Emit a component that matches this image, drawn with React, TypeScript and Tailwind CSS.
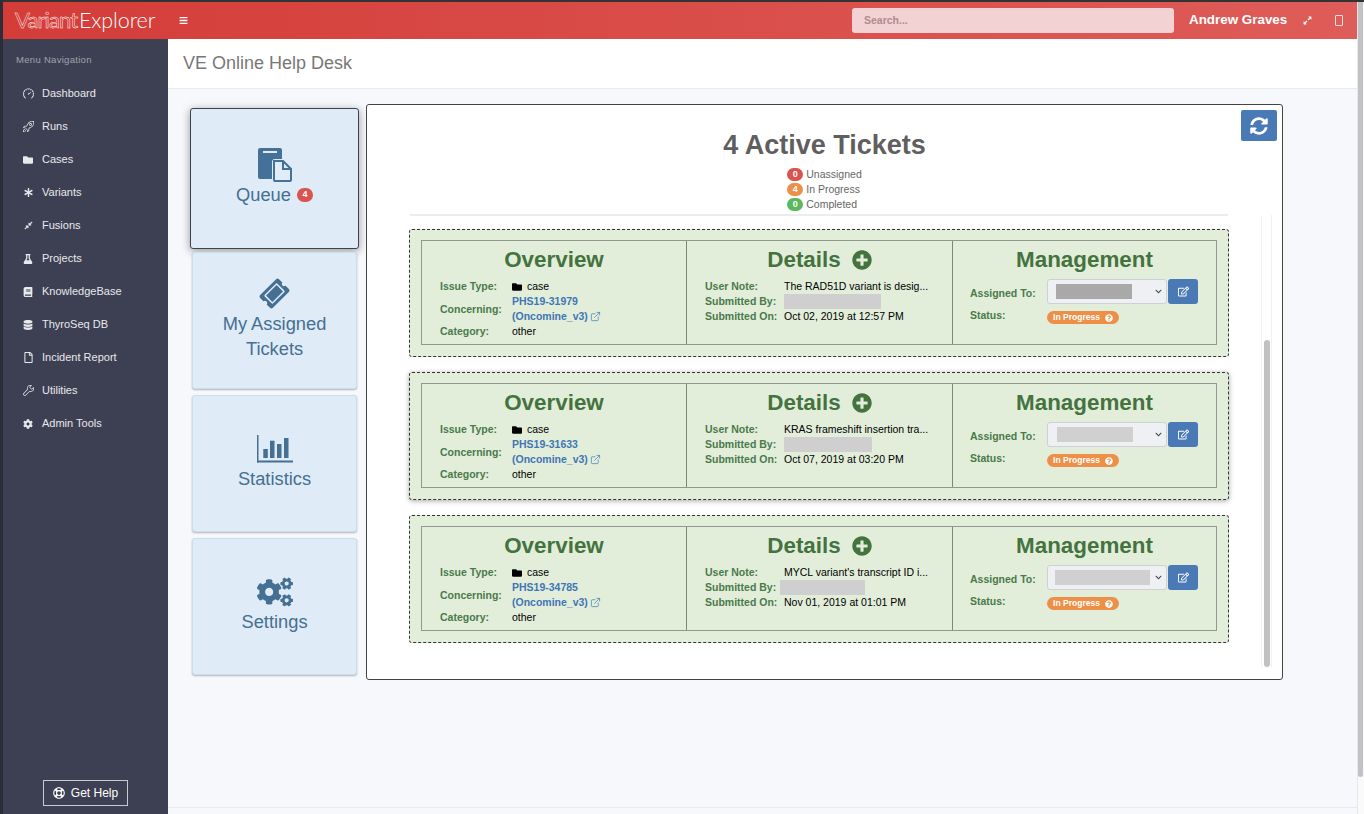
import React from 'react';
import { FaAsterisk, FaBars, FaBook, FaChevronDown, FaCog, FaCogs, FaCompressAlt, FaDatabase, FaExpandAlt, FaFlask, FaFolder, FaPlusCircle, FaQuestionCircle, FaRegEdit, FaRegFile, FaRegLifeRing, FaSyncAlt, FaTicketAlt } from 'react-icons/fa';
import { SlRocket, SlSpeedometer, SlWrench } from 'react-icons/sl';
import { ExternalLink } from 'lucide-react';

const navItems = [
  { label: 'Dashboard', icon: <SlSpeedometer size={11} /> },
  { label: 'Runs', icon: <SlRocket size={11} /> },
  { label: 'Cases', icon: <FaFolder size={10} /> },
  { label: 'Variants', icon: <FaAsterisk size={9} /> },
  { label: 'Fusions', icon: <FaCompressAlt size={9} /> },
  { label: 'Projects', icon: <FaFlask size={10} /> },
  { label: 'KnowledgeBase', icon: <FaBook size={10} /> },
  { label: 'ThyroSeq DB', icon: <FaDatabase size={10} /> },
  { label: 'Incident Report', icon: <FaRegFile size={11} /> },
  { label: 'Utilities', icon: <SlWrench size={11} /> },
  { label: 'Admin Tools', icon: <FaCog size={10} /> },
];

const tickets = [
  { id: 'PHS19-31979', note: 'The RAD51D variant is desig...', date: 'Oct 02, 2019 at 12:57 PM', byWidth: 'w-[97px] ml-0', selectBar: 'w-[76px] bg-[#a9a9a9] ml-2', shadow: '' },
  { id: 'PHS19-31633', note: 'KRAS frameshift insertion tra...', date: 'Oct 07, 2019 at 03:20 PM', byWidth: 'w-[88px] ml-0', selectBar: 'w-[76px] bg-[#d0d0d0] ml-[9px]', shadow: 'shadow-[0_1px_5px_rgba(0,0,0,0.35)]' },
  { id: 'PHS19-34785', note: "MYCL variant's transcript ID i...", date: 'Nov 01, 2019 at 01:01 PM', byWidth: 'w-[85px] -ml-1', selectBar: 'w-[95px] bg-[#d0d0d0] ml-[7px]', shadow: '' },
];

function QueueIcon() {
  return (
    <svg width="34" height="34" viewBox="0 0 34 34" className="text-[#44719a]">
      <path d="M2 0h20a2 2 0 0 1 2 2v9h-7a3 3 0 0 0-3 3v17H2a2 2 0 0 1-2-2V2a2 2 0 0 1 2-2z" fill="currentColor" />
      <rect x="5" y="3" width="14" height="2" fill="#ffffff" opacity="0.85" />
      <path d="M16 13h9l8 8v11a1 1 0 0 1-1 1H17a1 1 0 0 1-1-1z" fill="#e0ecf6" stroke="currentColor" strokeWidth="2" />
      <path d="M25 13v8h8" fill="none" stroke="currentColor" strokeWidth="2" />
    </svg>
  );
}

function StatsIcon() {
  return (
    <svg width="36" height="28" viewBox="0 0 36 28" fill="currentColor">
      <rect x="0" y="0" width="1.5" height="27.5" />
      <rect x="0" y="25.5" width="36" height="2" />
      <rect x="6.3" y="14" width="4.5" height="9" />
      <rect x="13" y="5.7" width="4.5" height="17.3" />
      <rect x="20" y="9" width="4.5" height="14" />
      <rect x="27" y="3" width="4.5" height="20" />
    </svg>
  );
}

function NavCard({ icon, lines, badge, active }: { icon: React.ReactNode; lines: string[]; badge?: string; active?: boolean }) {
  return (
    <div
      className={
        active
          ? 'flex h-[141px] w-[169px] flex-col items-center rounded-[3px] border border-[#3d4450] bg-[#dfebf6] pt-[38px] text-[#456f93] shadow-[0_2px_8px_rgba(0,0,0,0.4)]'
          : 'mx-[2px] flex h-[137px] w-[165px] flex-col items-center justify-center rounded-[3px] border border-[#c9dfea] bg-[#dfebf6] pb-[5px] text-[#456f93] shadow-[0_1px_2px_rgba(0,0,0,0.28)]'
      }
    >
      <div className="flex h-[35px] items-center justify-center">{icon}</div>
      {lines.map((line) => (
        <div key={line} className="flex h-[25px] items-center text-[18.3px] leading-[25px]">
          {line}
          {badge && (
            <span className="ml-[6px] flex h-[14px] w-[16px] items-center justify-center rounded-full bg-[#d9534f] text-[9px] font-bold text-white">
              {badge}
            </span>
          )}
        </div>
      ))}
    </div>
  );
}

function Legend({ color, count, label }: { color: string; count: string; label: string }) {
  return (
    <div className="flex h-[15px] items-center">
      <span className={`flex h-[13px] w-[16px] items-center justify-center rounded-full text-[9px] font-bold text-white ${color}`}>{count}</span>
      <span className="ml-[3px] text-[10.5px] text-[#666666]">{label}</span>
    </div>
  );
}

function Label({ children }: { children: React.ReactNode }) {
  return <div className="text-[10.5px] font-bold leading-[15px] text-[#4a7a4a]">{children}</div>;
}

function TicketCard({ ticket }: { ticket: (typeof tickets)[number] }) {
  return (
    <div className={`h-[128px] rounded-[3px] border border-dashed border-[#333333] bg-[#e2eeda] px-[11px] pt-[10px] ${ticket.shadow}`}>
      <div className="grid h-[105px] grid-cols-[265px_266px_1fr] border border-[#8f9a8c]">
        <div className="border-r border-[#7d877b]">
          <h2 className="h-[38px] text-center text-[22.4px] font-bold leading-[37px] text-[#44733f]">Overview</h2>
          <div className="grid grid-cols-[72px_1fr] pl-[18px] text-[10.5px] leading-[15px] text-black">
            <Label>Issue Type:</Label>
            <div className="flex items-center">
              <FaFolder size={10} className="mr-[5px]" />
              case
            </div>
            <div className="flex items-center">
              <Label>Concerning:</Label>
            </div>
            <div className="font-bold text-[#3f76b4]">
              <div>{ticket.id}</div>
              <div className="flex items-center">
                (Oncomine_v3)
                <ExternalLink size={11} className="ml-[2px]" strokeWidth={1.5} />
              </div>
            </div>
            <Label>Category:</Label>
            <div>other</div>
          </div>
        </div>
        <div className="border-r border-[#7d877b]">
          <h2 className="mb-[1px] flex h-[37px] items-center justify-center text-[22.4px] font-bold text-[#44733f]">
            Details
            <FaPlusCircle size={20} className="ml-[11px]" />
          </h2>
          <div className="grid grid-cols-[79px_1fr] pl-[18px] text-[10.5px] leading-[15px] text-black">
            <Label>User Note:</Label>
            <div className="whitespace-nowrap">{ticket.note}</div>
            <Label>Submitted By:</Label>
            <div className={`h-[15px] bg-[#cfcfcf] ${ticket.byWidth}`} />
            <Label>Submitted On:</Label>
            <div className="whitespace-nowrap">{ticket.date}</div>
          </div>
        </div>
        <div>
          <h2 className="h-[38px] text-center text-[22.4px] font-bold leading-[37px] text-[#44733f]">Management</h2>
          <div className="grid grid-cols-[77px_1fr] items-start pl-[17px]">
            <div className="pt-[7px]">
              <Label>Assigned To:</Label>
            </div>
            <div className="flex">
              <div className="flex h-[25px] w-[120px] items-center justify-between rounded-[3px] border border-[#cdd0d4] bg-[#eef0f3] pr-[4px]">
                <div className={`h-[15px] ${ticket.selectBar}`} />
                <FaChevronDown size={7} className="text-[#444444]" />
              </div>
              <div className="ml-[1px] flex h-[25px] w-[30px] items-center justify-center rounded-[3px] bg-[#4a7ab5] text-white">
                <FaRegEdit size={11} />
              </div>
            </div>
            <div className="pt-[4px]">
              <Label>Status:</Label>
            </div>
            <div className="pt-[7px]">
              <span className="flex h-[13px] w-[72px] items-center justify-center rounded-full bg-[#ee8f47] text-[8.5px] font-bold text-white">
                In Progress
                <FaQuestionCircle size={8} className="ml-[5px]" />
              </span>
            </div>
          </div>
        </div>
      </div>
    </div>
  );
}

export default function App() {
  return (
    <div className="relative flex h-[814px] w-[1364px] flex-col overflow-hidden border-t-2 border-l-[3px] border-t-[#333333] border-l-[#2b2d38] bg-[#f6f8fc] font-['Liberation_Sans',Arial,sans-serif]">
      {/* Top bar */}
      <header className="flex h-[37px] shrink-0 items-center bg-gradient-to-r from-[#d43c38] to-[#de5c59] text-white">
        <div className="w-[165px] pl-[12px] font-['Lato',sans-serif] text-[22px] leading-none whitespace-nowrap">
          <span className="inline-block w-[64px] text-transparent tracking-[-0.9px] [-webkit-text-stroke:0.45px_#ffffff]">Variant</span>
          <span className="text-[21.5px] font-light tracking-[-0.1px]">Explorer</span>
        </div>
        <FaBars size={9} className="ml-[11px]" />
        <div className="ml-[664px] flex h-[25px] w-[322px] items-center rounded-[3px] bg-[#f3d2d3] pl-[12px] text-[10.5px] font-bold text-[#b08a90]">
          Search...
        </div>
        <span className="ml-[15px] text-[13.4px] font-bold whitespace-nowrap">Andrew Graves</span>
        <FaExpandAlt size={9} className="ml-[16px]" />
        <div className="ml-[23px] h-[11px] w-[8px] rounded-[1px] border border-white/80" />
      </header>

      <div className="flex min-h-0 flex-1">
        {/* Sidebar */}
        <aside className="flex w-[165px] shrink-0 flex-col bg-[#3d4052] pb-[8px] text-[#e8e9ec]">
          <div className="mt-[15px] h-[12px] pl-[13px] text-[9.5px] leading-[12px] tracking-[0.3px] text-[#a0a2ad]">Menu Navigation</div>
          <nav className="mt-[11px] flex flex-col">
            {navItems.map((item) => (
              <div key={item.label} className="flex h-[33px] items-center">
                <span className="flex w-[39px] justify-center pl-[11px]">{item.icon}</span>
                <span className="text-[11px]">{item.label}</span>
              </div>
            ))}
          </nav>
          <div className="mt-auto ml-[40px] flex h-[26px] w-[85px] items-center justify-center border border-[#c9cad1] text-[12px] text-white">
            <FaRegLifeRing size={12} className="mr-[6px]" />
            Get Help
          </div>
        </aside>

        {/* Main */}
        <main className="flex min-w-0 flex-1 flex-col">
          <div className="h-[50px] shrink-0 border-b border-[#e7e9ed] bg-white pl-[15px] pr-[8px] text-[18px] leading-[49px] text-[#777777]">VE Online Help Desk</div>
          <div className="flex flex-1 items-start pl-[22px] pt-[15px]">
            <div className="mt-[4px] flex w-[170px] flex-col gap-[3px]">
              <NavCard active icon={<QueueIcon />} lines={['Queue']} badge="4" />
              <div className="flex flex-col gap-[6px]">
                <NavCard icon={<FaTicketAlt size={27} className="-rotate-45" />} lines={['My Assigned', 'Tickets']} />
                <NavCard icon={<StatsIcon />} lines={['Statistics']} />
                <NavCard icon={<FaCogs size={36} />} lines={['Settings']} />
              </div>
            </div>

            <section className="relative ml-[6px] h-[576px] w-[917px] rounded-[3px] border border-[#444444] bg-white">
              <div className="absolute top-[5px] right-[5px] flex h-[31px] w-[36px] items-center justify-center rounded-[2px] bg-[#4a7ab5] text-white">
                <FaSyncAlt size={18} />
              </div>
              <h1 className="pt-[22px] text-center text-[27px] font-bold leading-[36px] text-[#5f5f5f]">4 Active Tickets</h1>
              <div className="mt-[4px] flex flex-col items-center">
                <div className="flex flex-col">
                  <Legend color="bg-[#d9534f]" count="0" label="Unassigned" />
                  <Legend color="bg-[#ee8f47]" count="4" label="In Progress" />
                  <Legend color="bg-[#5cb85c]" count="0" label="Completed" />
                </div>
              </div>
              <div className="ml-[43px] mt-[2px] h-[2px] w-[818px] bg-[#eceeee]" />
              <div className="ml-[42px] mt-[13px] flex w-[820px] flex-col gap-[15px]">
                {tickets.map((ticket) => (
                  <TicketCard key={ticket.id} ticket={ticket} />
                ))}
              </div>
              {/* Scroll track */}
              <div className="absolute top-[110px] right-[10px] h-[452px] w-[11px] border-x border-[#f1f1f1]">
                <div className="absolute top-[125px] left-[2px] h-[327px] w-[6px] rounded-full bg-[#c1c1c4]" />
              </div>
            </section>
          </div>
          <div className="h-[7px] shrink-0 border-t border-[#e7e9ed]" />
        </main>
      </div>

      {/* Page scrollbar */}
      <div className="absolute top-0 right-0 h-[812px] w-[7px] border-l border-[#e8e8ea] bg-[#fafafa]">
        <div className="absolute top-0 right-[1px] h-[775px] w-[5px] rounded-b-full bg-[#c2c2c4]" />
      </div>
    </div>
  );
}
